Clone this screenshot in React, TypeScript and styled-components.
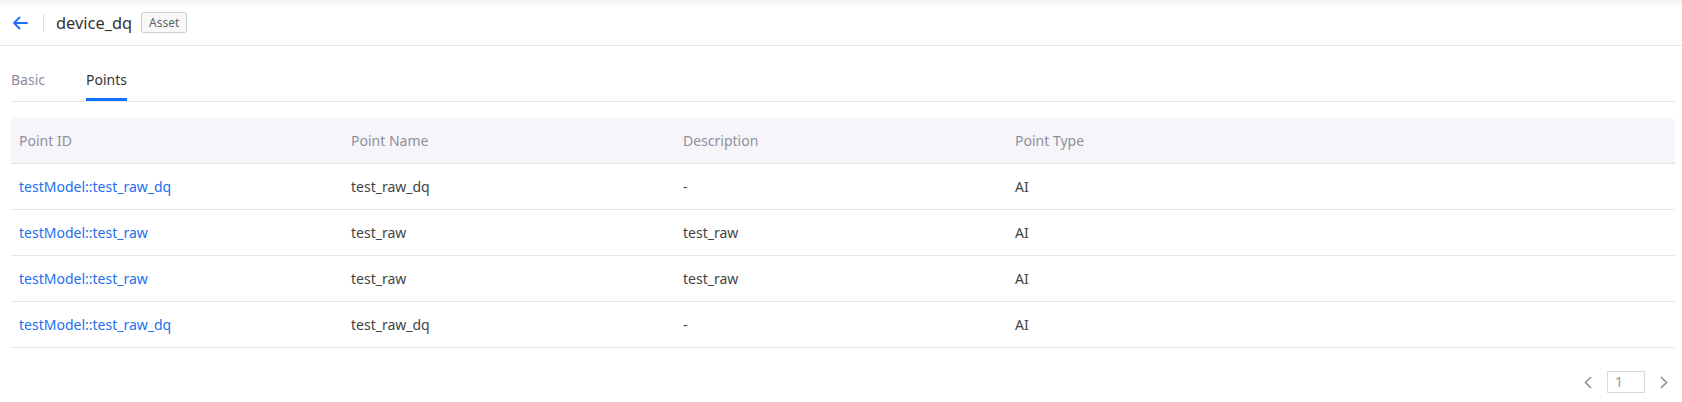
import React from 'react';
import styled, {createGlobalStyle} from 'styled-components';

type PointType = {
    id: string
    name: string
    description: string
    type: string
}

const points: PointType[] = [
    {id: 'testModel::test_raw_dq', name: 'test_raw_dq', description: '-', type: 'AI'},
    {id: 'testModel::test_raw', name: 'test_raw', description: 'test_raw', type: 'AI'},
    {id: 'testModel::test_raw', name: 'test_raw', description: 'test_raw', type: 'AI'},
    {id: 'testModel::test_raw_dq', name: 'test_raw_dq', description: '-', type: 'AI'},
]

const GlobalStyle = createGlobalStyle`
  body {
    margin: 0;
    background: #fff;
    font-family: "Noto Sans", "Liberation Sans", sans-serif;
    color: #333;
  }
`

export default function App() {
    return (
        <Page>
            <GlobalStyle/>
            <TopBar>
                <BackButton>
                    <svg width="16" height="14" viewBox="0 0 16 14" fill="none">
                        <path d="M15 7H2M7.5 1.5L2 7l5.5 5.5" stroke="#1f6fff" strokeWidth="1.8"
                              strokeLinecap="round" strokeLinejoin="round"/>
                    </svg>
                </BackButton>
                <Divider/>
                <Title>device_dq</Title>
                <Badge>Asset</Badge>
            </TopBar>
            <Content>
                <TabBar>
                    <Tab>Basic</Tab>
                    <Tab active>Points</Tab>
                </TabBar>
                <Table>
                    <colgroup>
                        <col style={{width: '332px'}}/>
                        <col style={{width: '332px'}}/>
                        <col style={{width: '332px'}}/>
                        <col/>
                    </colgroup>
                    <thead>
                    <tr>
                        <HeadCell>Point ID</HeadCell>
                        <HeadCell>Point Name</HeadCell>
                        <HeadCell>Description</HeadCell>
                        <HeadCell last>Point Type</HeadCell>
                    </tr>
                    </thead>
                    <tbody>
                    {points.map((p, i) => (
                        <tr key={i}>
                            <Cell><Link>{p.id}</Link></Cell>
                            <Cell>{p.name}</Cell>
                            <Cell>{p.description}</Cell>
                            <Cell>{p.type}</Cell>
                        </tr>
                    ))}
                    </tbody>
                </Table>
                <Pager>
                    <PagerArrow>
                        <svg width="8" height="13" viewBox="0 0 8 13" fill="none">
                            <path d="M7 1L1.5 6.5 7 12" stroke="#8c8c99" strokeWidth="1.5"/>
                        </svg>
                    </PagerArrow>
                    <PageInput>1</PageInput>
                    <PagerArrow>
                        <svg width="8" height="13" viewBox="0 0 8 13" fill="none">
                            <path d="M1 1l5.5 5.5L1 12" stroke="#8c8c99" strokeWidth="1.5"/>
                        </svg>
                    </PagerArrow>
                </Pager>
            </Content>
        </Page>
    );
};

const Page = styled.div`
  width: 100%;
  min-height: 402px;
`
const TopBar = styled.div`
  height: 45px;
  display: flex;
  align-items: center;
  padding-left: 12px;
  border-bottom: 1px solid #e6e6e6;
  background: linear-gradient(to bottom, rgba(0, 0, 0, 0.05) 0, rgba(0, 0, 0, 0) 7px);
`
const BackButton = styled.span`
  display: flex;
  align-items: center;
  width: 16px;
  height: 14px;
  cursor: pointer;
`
const Divider = styled.span`
  width: 1px;
  height: 18px;
  background: #dcdcdc;
  margin: 0 12px 0 15px;
`
const Title = styled.span`
  font-size: 16.4px;
  color: #333;
  line-height: 22px;
`
const Badge = styled.span`
  margin-left: 9px;
  height: 21px;
  box-sizing: border-box;
  padding: 0 7px;
  display: flex;
  align-items: center;
  border: 1px solid #d0d0d6;
  border-radius: 3px;
  background: #f8f8f8;
  font-size: 12px;
  color: #666;
`
const Content = styled.div`
  padding: 0 7px 0 11px;
`
const TabBar = styled.div`
  margin-top: 15px;
  display: flex;
  gap: 41px;
  border-bottom: 1px solid #e6e6e6;
`
const Tab = styled.div<{ active?: boolean }>`
  height: 40px;
  box-sizing: border-box;
  display: flex;
  align-items: center;
  font-size: 14px;
  color: ${props => props.active ? '#333' : '#8c8c99'};
  border-bottom: 3px solid ${props => props.active ? '#0f6fff' : 'transparent'};
  cursor: pointer;
`
const Table = styled.table`
  margin-top: 16px;
  width: 100%;
  table-layout: fixed;
  border-collapse: collapse;
  font-size: 14px;
`
const HeadCell = styled.th<{ last?: boolean }>`
  height: 45px;
  padding: 0 8px;
  text-align: left;
  font-weight: 400;
  color: #90909c;
  background: #f5f5fa;
  border-bottom: 1px solid #e2e2e8;
  border-top-right-radius: ${props => props.last ? '4px' : '0'};
  &:first-child {
    border-top-left-radius: 4px;
  }
`
const Cell = styled.td`
  height: 45px;
  padding: 0 8px;
  color: #444;
  border-bottom: 1px solid #e6e6e6;
  white-space: nowrap;
`
const Link = styled.a`
  color: #2170f0;
  cursor: pointer;
`
const Pager = styled.div`
  margin-top: 23px;
  display: flex;
  justify-content: flex-end;
  align-items: center;
  gap: 15px;
  padding-right: 7px;
`
const PagerArrow = styled.span`
  display: flex;
  align-items: center;
  cursor: pointer;
`
const PageInput = styled.div`
  width: 38px;
  height: 22px;
  box-sizing: border-box;
  border: 1px solid #d9d9de;
  padding-left: 7px;
  font-size: 14px;
  line-height: 20px;
  color: #9a9aa5;
`
